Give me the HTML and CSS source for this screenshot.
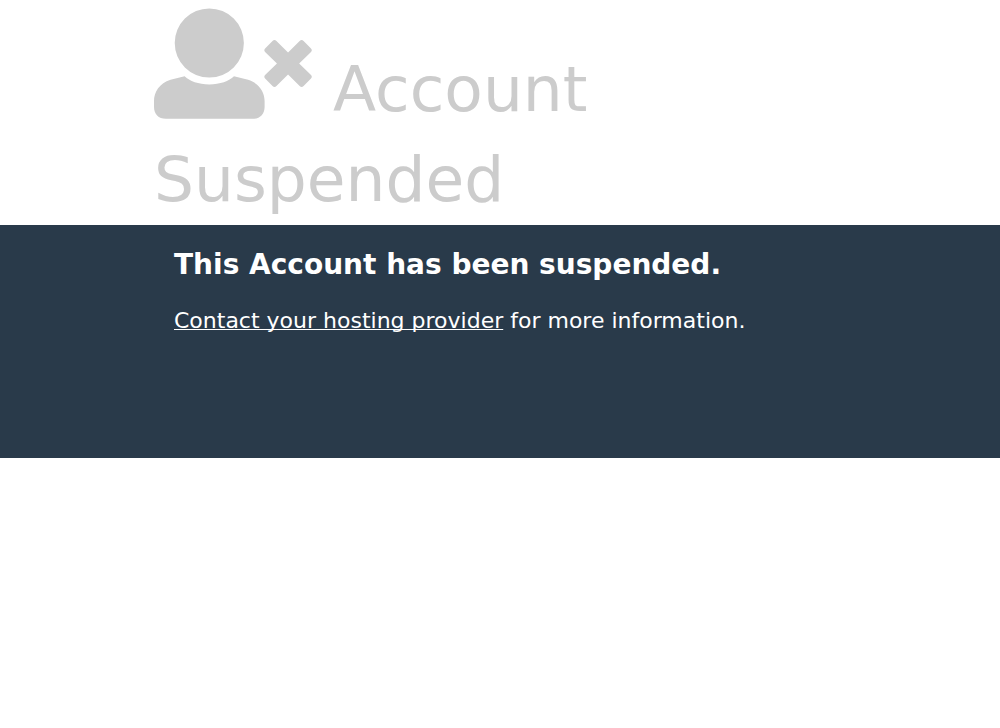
FILE: index.html
```html
<!DOCTYPE html>
<html lang="en">
<head>
<meta charset="utf-8">
<meta name="viewport" content="width=device-width, initial-scale=1">
<title>Account Suspended</title>
<link rel="stylesheet" href="styles.css">
</head>
<body>
<header class="container status">
<svg class="status-icon" viewBox="0 0 640 448" aria-hidden="true"><path d="M224 281a140 140 0 1 0 0-280a140 140 0 1 0 0 280zM124 276C144 296 180 309 224 309S304 296 324 276L381 290C426 304 448 340 448 376V400C448 428 430 448 400 448H48C18 448 0 428 0 400V376C0 340 22 304 67 290Z"/><path d="M588 224l47-46a11 11 0 0 0 0-16l-29-29a11 11 0 0 0-16 0l-47 46l-47-46a11 11 0 0 0-16 0l-29 29a11 11 0 0 0 0 16l47 46l-47 46a11 11 0 0 0 0 16l29 29a11 11 0 0 0 16 0l47-46l47 46a11 11 0 0 0 16 0l29-29a11 11 0 0 0 0-16z"/></svg>
<h1 class="status-title">Account Suspended</h1>
</header>
<main class="info">
<section class="container info-body">
<h2 class="info-heading">This Account has been suspended.</h2>
<p class="info-text"><a class="info-link" href="#">Contact your hosting provider</a> for more information.</p>
</section>
</main>
</body>
</html>
```
FILE: styles.css
```css
* {
  box-sizing: border-box;
}

body {
  margin: 0;
  background: #ffffff;
  color: #cccccc;
  font-family: "DejaVu Sans", sans-serif;
}

.container {
  width: 70%;
  margin: 0 auto;
}

.status {
  padding: 8px 4px 0;
}

.status-icon {
  width: 158px;
  height: 111px;
  margin-right: 16px;
  vertical-align: -8px;
  fill: #cccccc;
}

.status-title {
  display: inline;
  margin: 0;
  font-size: 63px;
  font-weight: 400;
  line-height: 90px;
}

.info {
  min-height: 233px;
  background: #293a4a;
  color: #ffffff;
}

.info-body {
  padding: 20px 24px;
}

.info-heading {
  margin: 0;
  font-size: 28px;
  line-height: 40px;
}

.info-text {
  margin: 20px 0 0;
  font-size: 22px;
  line-height: 32px;
}

.info-link {
  color: #ffffff;
  text-decoration-thickness: 1px;
  text-decoration-skip-ink: none;
  text-underline-offset: 1px;
}
```
